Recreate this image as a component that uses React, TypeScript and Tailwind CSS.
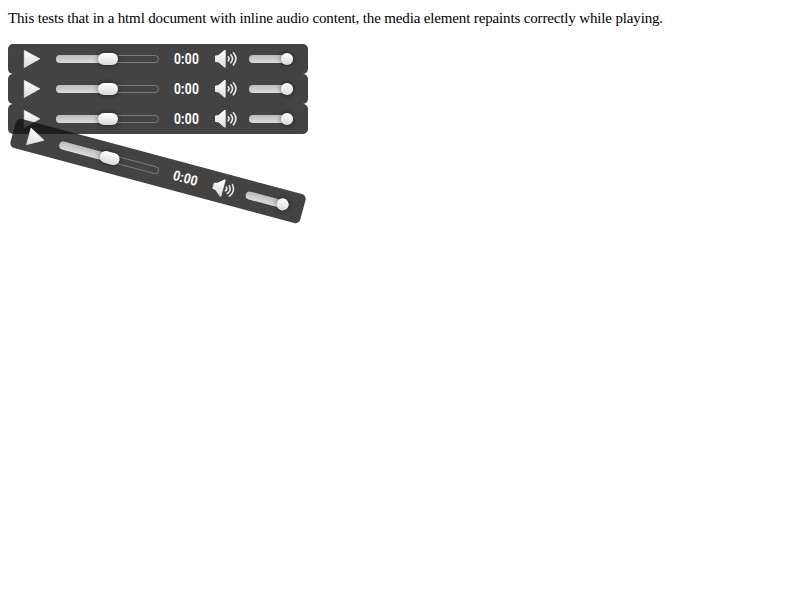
function AudioPlayer({ className = "" }: { className?: string }) {
  return (
    <div
      className={`flex h-[30px] w-[300px] items-center rounded-[5px] bg-[rgba(20,20,20,0.8)] ${className}`}
    >
      <svg className="ml-[15px] h-[20px] w-[18px] shrink-0" viewBox="0 0 18 20">
        <defs>
          <linearGradient id="iconFill" x1="0" y1="0" x2="0" y2="1">
            <stop offset="0" stopColor="#fff" />
            <stop offset="1" stopColor="#dcdcdc" />
          </linearGradient>
        </defs>
        <path d="M1.3 1.4 L16.8 9.8 L1.3 18.4 Z" fill="url(#iconFill)" stroke="#eee" strokeWidth="0.8" strokeLinejoin="round" />
      </svg>

      <div className="relative ml-[15px] h-[8px] w-[103px] shrink-0 rounded-full border border-[#7b7b7b]">
        <div className="absolute -top-px -left-px h-[8px] w-[52px] rounded-l-full bg-linear-to-b from-[#bcbcbc] to-[#dcdcdc]" />
        <div className="absolute -top-[3px] left-[41px] h-[12px] w-[20px] rounded-[6px] bg-linear-to-b from-white to-[#dadada] shadow-[0_0_5px_rgba(0,0,0,0.55)]" />
      </div>

      <span className="w-[54px] shrink-0 scale-y-[1.15] pl-[1px] text-center font-['Roboto',sans-serif] text-[12px] leading-[30px] font-bold tracking-[0.3px] text-white">
        0:00
      </span>

      <svg className="ml-[1px] h-[20px] w-[24px] shrink-0" viewBox="0 0 24 20">
        <path d="M1 6.8 L4.6 6 L10.4 1 H11.7 V18.6 H10.4 L4.6 13.6 L1 12.8 Z" fill="url(#iconFill)" />
        <g fill="none" stroke="#e8e8e8" strokeWidth="1.6" strokeLinecap="round">
          <path d="M14.2 7.8 Q16 9.8 14.2 11.8" />
          <path d="M16.8 5.8 Q20.2 9.8 16.8 13.8" />
          <path d="M19.4 3.8 Q24.4 9.8 19.4 15.8" />
        </g>
      </svg>

      <div className="relative ml-[11px] h-[8px] w-[44px] shrink-0 rounded-full bg-linear-to-b from-[#bcbcbc] to-[#dcdcdc]">
        <div className="absolute -top-[2px] right-0 h-[12px] w-[12px] rounded-full bg-linear-to-b from-white to-[#dadada] shadow-[0_0_5px_rgba(0,0,0,0.55)]" />
      </div>
    </div>
  );
}

export default function App() {
  return (
    <main className="h-[600px] w-[800px] bg-white p-2 text-black">
      <p className="mb-[16px] h-[20px] font-['Liberation_Serif',serif] text-[15px] leading-[21px] tracking-[-0.15px] whitespace-nowrap">
        This tests that in a html document with inline audio content, the media element repaints correctly while playing.
      </p>
      <AudioPlayer />
      <AudioPlayer />
      <AudioPlayer />
      <AudioPlayer className="mt-[22px] rotate-15" />
    </main>
  );
}
